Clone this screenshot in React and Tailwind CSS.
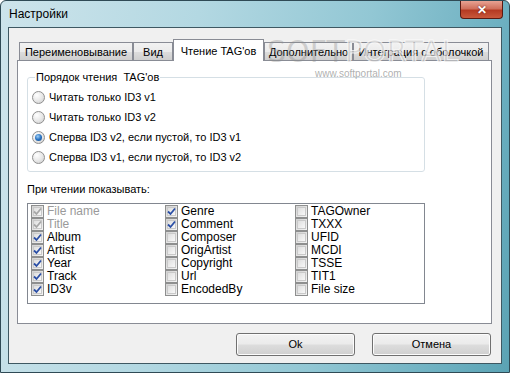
import React from "react";

function Check({ disabled }) {
  return (
    <svg width="9" height="9" viewBox="0 0 9 9" className="absolute left-[1px] top-[1px]">
      <path d="M1 4.5 L3.5 7 L8 1.5" fill="none" stroke={disabled ? "#a8a8a8" : "#2b4fa6"} strokeWidth="1.8" />
    </svg>
  );
}

function CheckBox({ checked, disabled, label }) {
  return (
    <div className="flex items-center h-[13px]">
      <div className="relative w-[13px] h-[13px] border border-[#8e8f8f] bg-[linear-gradient(135deg,#d2d2d2_0%,#f4f4f4_100%)] shrink-0">
        <div className="absolute inset-[1px] border border-[#c9c9c9] bg-[linear-gradient(135deg,#dedede_0%,#f8f8f8_100%)]"></div>
        {checked && <Check disabled={disabled} />}
      </div>
      <span className={"ml-[3px] text-[12px] leading-[13px] whitespace-nowrap " + (disabled ? "text-[#9a9a9a]" : "text-black")}>{label}</span>
    </div>
  );
}

function Radio({ checked, label }) {
  return (
    <div className="flex items-center h-[20px]">
      <div className="relative w-[13px] h-[13px] rounded-full border border-[#8f8f8f] bg-[radial-gradient(circle_at_35%_30%,#ffffff_0%,#e6e6e6_55%,#c9c9c9_100%)] shrink-0">
        {checked && (
          <div className="absolute left-[2px] top-[2px] w-[7px] h-[7px] rounded-full bg-[radial-gradient(circle_at_40%_35%,#9fd0f6_0%,#2a73c2_50%,#174a86_100%)]"></div>
        )}
      </div>
      <span className="ml-[4px] text-[11px] leading-[14px] text-black whitespace-nowrap">{label}</span>
    </div>
  );
}

function Tab({ label, w, active }) {
  if (active) {
    return (
      <div className={"relative z-10 h-[22px] mb-[-1px] bg-white border border-b-0 border-[#898c95] flex items-start justify-center pt-[4px] text-[11px] leading-[14px] text-black whitespace-nowrap " + w}>
        {label}
      </div>
    );
  }
  return (
    <div className={"h-[18px] border border-b-0 border-[#898c95] bg-[linear-gradient(180deg,#f2f2f2_0%,#ebebeb_50%,#dddddd_51%,#cfcfcf_100%)] flex items-center justify-center text-[11px] leading-[14px] text-black whitespace-nowrap overflow-hidden " + w}>
      {label}
    </div>
  );
}

function Button({ label }) {
  return (
    <div className="w-[119px] h-[23px] rounded-[3px] border border-[#707070] bg-[linear-gradient(180deg,#f2f2f2_0%,#ebebeb_48%,#dddddd_52%,#cfcfcf_100%)] shadow-[inset_0_0_0_1px_#fcfcfc] flex items-center justify-center text-[11px] text-black">
      {label}
    </div>
  );
}

export default function App() {
  const col1 = [
    ["File name", true, true],
    ["Title", true, true],
    ["Album", true, false],
    ["Artist", true, false],
    ["Year", true, false],
    ["Track", true, false],
    ["ID3v", true, false],
  ];
  const col2 = [
    ["Genre", true],
    ["Comment", true],
    ["Composer", false],
    ["OrigArtist", false],
    ["Copyright", false],
    ["Url", false],
    ["EncodedBy", false],
  ];
  const col3 = ["TAGOwner", "TXXX", "UFID", "MCDI", "TSSE", "TIT1", "File size"];

  return (
    <div className="relative w-[510px] h-[373px] overflow-hidden flex flex-col px-[7px] pb-[8px] border border-[#2f4a55] rounded-t-[6px] bg-[linear-gradient(100deg,#cde4eb_0%,#b3d8e2_35%,#92c7d4_65%,#6aaebf_90%,#5ba3b4_100%)] font-['Liberation_Sans',Arial,sans-serif]">
      {/* title bar */}
      <div className="h-[26px] flex items-center pl-[1px] text-[12px] text-black shrink-0">Настройки</div>
      <div className="absolute right-[6px] top-0 w-[43px] h-[18px] rounded-b-[4px] border border-t-0 border-[#5a1a12] bg-[linear-gradient(180deg,#e8a293_0%,#d0705c_45%,#b53a22_55%,#c9583b_100%)] flex items-center justify-center">
        <span className="text-white text-[12px] font-bold leading-none [text-shadow:0_0_2px_#5a1a12]">✕</span>
      </div>

      {/* client */}
      <div className="flex-1 border border-[#3e5862] bg-[#f0f0f0] pl-[8px] pt-[11px] flex flex-col">
        {/* tabs */}
        <div className="h-[21px] flex items-end pl-[2px]">
          <Tab label="Переименовывание" w="w-[114px]" />
          <Tab label="Вид" w="w-[40px]" />
          <Tab label="Чтение TAG'ов" w="w-[91px]" active />
          <Tab label="Дополнительно" w="w-[89px]" />
          <Tab label="Интеграция с оболочкой" w="w-[136px]" />
        </div>
        {/* page */}
        <div className="relative w-[475px] h-[264px] border border-[#898c95] bg-white flex flex-col">
          <fieldset className="ml-[9px] mt-[9px] w-[398px] border border-[#d5dfe5] rounded-[3px] pl-[4px] pb-[4px]">
            <legend className="ml-[3px] px-[1px] text-[11px] leading-[14px] text-black">Порядок чтения&nbsp; TAG'ов</legend>
            <div className="pt-[3px] flex flex-col">
              <Radio label="Читать только ID3 v1" />
              <Radio label="Читать только ID3 v2" />
              <Radio label="Сперва ID3 v2, если пустой, то ID3 v1" checked />
              <Radio label="Сперва ID3 v1, если пустой, то ID3 v2" />
            </div>
          </fieldset>
          <div className="ml-[9px] mt-[10px] text-[11px] leading-[14px] text-black">При чтении показывать:</div>
          <div className="ml-[9px] mt-[7px] w-[398px] h-[101px] border border-[#828790] bg-white pl-[3px] pt-[1px] flex">
            <div className="w-[134px] flex flex-col">
              {col1.map(([l, c, d]) => (
                <CheckBox key={l} label={l} checked={c} disabled={d} />
              ))}
            </div>
            <div className="w-[130px] flex flex-col">
              {col2.map(([l, c]) => (
                <CheckBox key={l} label={l} checked={c} />
              ))}
            </div>
            <div className="flex flex-col">
              {col3.map((l) => (
                <CheckBox key={l} label={l} />
              ))}
            </div>
          </div>
        </div>
        {/* buttons */}
        <div className="mt-[9px] flex justify-end gap-[17px] pr-[10px]">
          <Button label="Ok" />
          <Button label="Отмена" />
        </div>
      </div>

      {/* watermark */}
      <div className="absolute left-[266px] top-[36px] pointer-events-none flex items-baseline text-[30px] leading-none font-['DejaVu_Sans',sans-serif]">
        <span className="text-[rgba(140,140,140,0.35)]">SOFT</span>
        <span className="text-[rgba(205,205,205,0.65)] [-webkit-text-stroke:1px_rgba(255,255,255,0.7)]">PORTAL</span>
      </div>
      <div className="absolute left-[314px] top-[65px] pointer-events-none text-[10px] text-[rgba(120,120,120,0.6)]">www.softportal.com</div>
    </div>
  );
}
